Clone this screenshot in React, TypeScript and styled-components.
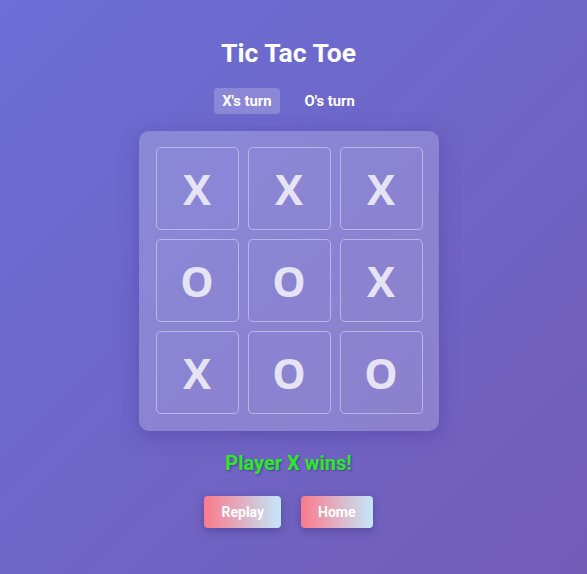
import React from "react";
import styled, { createGlobalStyle } from "styled-components";

const Global = createGlobalStyle`
  html, body { margin: 0; padding: 0; }
  body {
    font-family: Roboto, "Liberation Sans", sans-serif;
    background: linear-gradient(135deg, #6b6fd6 0%, #735cb8 100%);
    min-height: 100vh;
  }
`;

const Page = styled.div`
  min-height: 574px;
  display: flex;
  flex-direction: column;
  align-items: center;
  padding-top: 36px;
  padding-right: 10px;
  box-sizing: border-box;
`;

const Title = styled.h1`
  margin: 0;
  font-size: 26.5px;
  font-weight: 700;
  color: #ffffff;
  line-height: 34px;
`;

const Turns = styled.div`
  display: flex;
  gap: 17px;
  margin-top: 18px;
`;

const Turn = styled.div<{ $active?: boolean }>`
  font-size: 14.8px;
  font-weight: 700;
  color: #fff;
  padding: 0 8px;
  height: 26px;
  line-height: 26px;
  border-radius: 4px;
  background: ${(p) => (p.$active ? "rgba(255,255,255,0.2)" : "transparent")};
`;

const Board = styled.div`
  margin-top: 17px;
  display: grid;
  grid-template-columns: repeat(3, 83px);
  grid-auto-rows: 83px;
  gap: 9px;
  padding: 16px 16px 17px 17px;
  background: rgba(255, 255, 255, 0.2);
  border-radius: 10px;
  box-shadow: 0 4px 20px rgba(60, 40, 140, 0.35);
`;

const Cell = styled.div`
  box-sizing: border-box;
  border: 1px solid rgba(255, 255, 255, 0.4);
  border-radius: 5px;
  display: flex;
  align-items: center;
  justify-content: center;
  font-size: 42px;
  font-weight: 700;
  color: rgba(255, 255, 255, 0.8);
  font-family: "Open Sans", Roboto, sans-serif;
`;

const Result = styled.div`
  margin-top: 20px;
  font-size: 20px;
  font-weight: 700;
  color: #2be82b;
  text-shadow: 1px 1px 2px rgba(40, 30, 90, 0.5);
  line-height: 24px;
`;

const Actions = styled.div`
  display: flex;
  gap: 20px;
  margin-top: 21px;
`;

const Button = styled.button`
  height: 32px;
  padding: 0 17px;
  border: none;
  border-radius: 4px;
  background: linear-gradient(90deg, #fb7a8c 0%, #c2e8fa 100%);
  color: #fff;
  font-family: Roboto, "Liberation Sans", sans-serif;
  font-size: 14px;
  font-weight: 700;
  box-shadow: 0 3px 8px rgba(40, 30, 100, 0.35);
  cursor: pointer;
`;

const cells = ["X", "X", "X", "O", "O", "X", "X", "O", "O"];

export default function App() {
  return (
    <>
      <Global />
      <Page>
        <Title>Tic Tac Toe</Title>
        <Turns>
          <Turn $active>X's turn</Turn>
          <Turn>O's turn</Turn>
        </Turns>
        <Board>
          {cells.map((c, i) => (
            <Cell key={i}>{c}</Cell>
          ))}
        </Board>
        <Result>Player X wins!</Result>
        <Actions>
          <Button>Replay</Button>
          <Button>Home</Button>
        </Actions>
      </Page>
    </>
  );
}
